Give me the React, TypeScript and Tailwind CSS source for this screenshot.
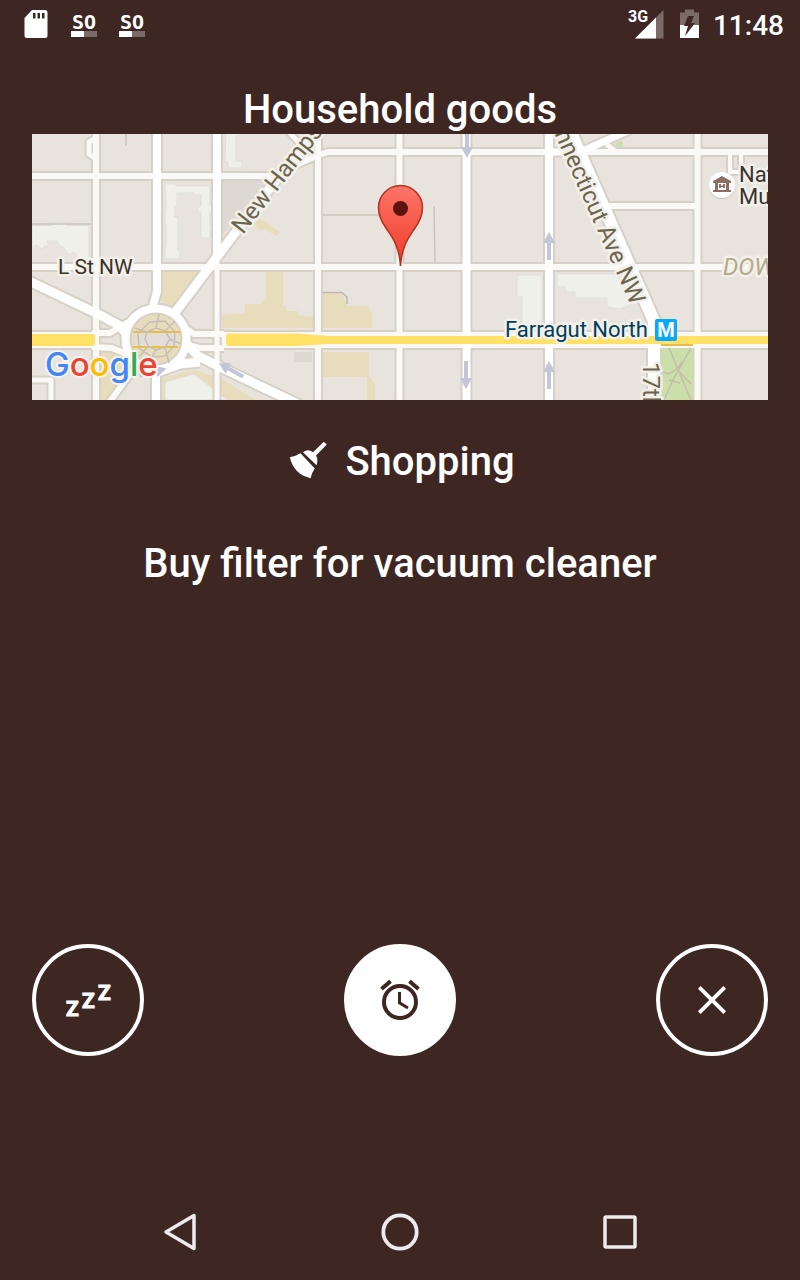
interface Road {
  d: string;
  width: number;
  major?: boolean;
}

const roads: Road[] = [
  { d: "M64 -5V271", width: 6 },
  { d: "M-5 42H240L286 21L296 18H741", width: 6 },
  { d: "M-5 133H741", width: 6 },
  { d: "M286 -5V271", width: 6 },
  { d: "M367.5 -5V271", width: 6 },
  { d: "M665.5 -5V271", width: 6 },
  { d: "M575 72H665", width: 6 },
  { d: "M185 120V271", width: 5 },
  { d: "M-5 206H64M190 206H741", width: 16 },
  { d: "M60 199L78 199L96 188M60 213L80 214L92 219L104 232L76 270", width: 6 },
  { d: "M150 192L162 200H192M152 210L168 214H192", width: 6 },
  { d: "M-5 246H19V271", width: 5 },
  { d: "M255 -4L272 14", width: 5 },
  { d: "M698 18V38H709V18", width: 4 },
  { d: "M572 8L584 18", width: 5 },
  { d: "M125 -5V157L121 172M124 238V271", width: 8, major: true },
  { d: "M185 -5V124", width: 8, major: true },
  { d: "M434.5 -5V271", width: 8, major: true },
  { d: "M517 -5V271", width: 8, major: true },
  { d: "M142 180L200 103L286 -8", width: 9, major: true },
  { d: "M-5 146L70 182L88 192L98 204", width: 9, major: true },
  { d: "M150 205L166 222L188 233L268 271M126 238L148 230L168 228", width: 9, major: true },
  { d: "M516 18H548L598 -4", width: 7, major: true },
  { d: "M537 -6L622 187V271", width: 12, major: true },
  { d: "M94 205a30 30 0 1 0 60 0a30 30 0 1 0 -60 0", width: 9, major: true },
];

const buildings = [
  "M0 91.500H20V88.500H35V91.500H57V129H46V123L42 118L37 121L31 113L27 112L25 107H15L17 110L10 115L5 111L0 114Z",
  "M133 50H144V52H178V71H181V78H178V94H181V96H178V104H169V78H166V72H169V61H162V59H145V73H143V83H146V116H148V125H133V112H134V91H133V75H134Z",
  "M485 141H510V193H490V163H485Z",
  "M525 140H585L601 170L588 175L575 173V164H543V158H533V153H525Z",
  "M194 -2H206V2H204V27H210V34H196V28H193Z",
  "M133 248L162 240L195 266H133Z",
];

const landmarks = [
  "M130 138H172L143 173L129 168Z",
  "M190 181L213 179V170H229L234 163V138H251V172H254V177H266V181L281 183V194H190Z",
  "M291 159H310L315 172H337V178H340V194H291Z",
  "M291 218H337V241L343 251V266H335V243H291Z",
  "M226 83L248 98L245 102L232 95L228 96L221 91Z",
  "M68 216L92 218L103 232L75 266H68Z",
  "M130 244L163 236L190 245L230 270H130Z",
];

function StreetArrow({ x, y, angle }: { x: number; y: number; angle: number }) {
  return (
    <path
      d="M-6 -3L0 -14L6 -3H2V14H-2V-3Z"
      fill="#c3c6d8"
      transform={`translate(${x} ${y}) rotate(${angle})`}
    />
  );
}

function LocationMap() {
  return (
    <svg
      viewBox="0 0 736 266"
      preserveAspectRatio="xMidYMid slice"
      className="block h-[266px] w-full overflow-hidden bg-[#e8e4dd] font-[Roboto,sans-serif]"
      role="img"
      aria-label="Map"
    >
      <defs>
        <linearGradient id="pin" x1="0" y1="0" x2="0" y2="1">
          <stop offset="0" stopColor="#fd7567" />
          <stop offset="1" stopColor="#ee3b2b" />
        </linearGradient>
      </defs>

      <path d="M187 46H238L228 58L191 100Z" fill="#ddd8d1" />
      <rect x="262" y="218" width="18" height="10" fill="#ddd8d1" />
      {landmarks.map((d) => (
        <path key={d} d={d} fill="#e7ddbd" />
      ))}
      {buildings.map((d) => (
        <path key={d} d={d} fill="#f0f0ea" stroke="#dfdfda" strokeWidth="1" />
      ))}
      <path d="M0 90H62M291 81H364M402 72L403 129M94 0V12" stroke="#c9c3b9" strokeWidth="1.500" fill="none" />
      <path d="M291 158.500H310L315 163V170" stroke="#bdb7ac" strokeWidth="1.500" fill="none" />
      <path d="M630 212H661V266H630Z" fill="#cadfaa" />
      <path d="M583 10L590 6L591 12L586 14Z" fill="#cadfaa" />

      <g fill="none" stroke="#d7d0c6" strokeLinejoin="round">
        <path d="M64 4L57 8V20L64 25" strokeWidth="9" />
        {roads.map((road) => (
          <path key={road.d} d={road.d} strokeWidth={road.width + 4} />
        ))}
      </g>
      <g fill="none" strokeLinejoin="round">
        <path d="M64 4L57 8V20L64 25" stroke="#faf9f6" strokeWidth="5" />
        {roads.map((road) => (
          <path key={road.d} d={road.d} stroke={road.major ? "#ffffff" : "#faf9f6"} strokeWidth={road.width} />
        ))}
      </g>
      <path d="M629 214H661V266H631Z" fill="#cadfaa" />
      <path
        d="M637 214L659 266M659 214L641 246L632 266M631 238L637 240L645 235L659 250M637 246L648 249M645 235L650 228"
        stroke="#c5bda9"
        strokeWidth="1.500"
        fill="none"
      />

      <circle cx="124" cy="205" r="25.500" fill="#e7ddbd" stroke="#d7d0c6" strokeWidth="2" />
      <path d="M103 198H146V213H103Z" fill="#e2ddd5" />
      <path d="M101 198H148M101 213H146" stroke="#e9bf3f" strokeWidth="2" />
      <path
        d="M115 198L124 194L133 197L138 205L133 213L124 216L116 212L113 205ZM106 199L118 188L133 187L143 198L142 212L133 222L120 223L107 214ZM124 194L127 180M133 197L143 187M138 205L149 210M133 213L137 229M116 212L108 222M115 198L103 194M124 216L120 223"
        fill="none"
        stroke="#c5bfb5"
        strokeWidth="1.500"
      />

      <g fill="#ffe168">
        <rect x="-5" y="200" width="68" height="12" rx="2" />
        <path d="M196 199.500H266L296 202H520L741 202V210H296L266 212H196Q194 212 194 210V202Q194 199.500 196 199.500Z" />
      </g>
      <path d="M629 211H661" stroke="#e5bb4a" strokeWidth="2" />

      <StreetArrow x={435} y={10} angle={180} />
      <StreetArrow x={517} y={112} angle={0} />
      <StreetArrow x={434} y={241} angle={180} />
      <StreetArrow x={517} y={241} angle={0} />
      <StreetArrow x={199} y={236} angle={-61} />
      <StreetArrow x={121} y={238} angle={75} />

      <g
        className="text-[22px]"
        fill="#6b6550"
        stroke="#f3f0ea"
        strokeWidth="5"
        strokeLinejoin="round"
        paintOrder="stroke"
      >
        <text className="text-[21px]" x="26" y="140" fill="#39322a">
          L St NW
        </text>
        <text className="text-[24px]" transform="translate(211 101) rotate(-52)">
          New Hamps
        </text>
        <text className="text-[24px]" transform="translate(599 172) rotate(66)" textAnchor="end">
          onnecticut Ave NW
        </text>
        <text className="text-[24px]" transform="translate(611 228) rotate(90)">
          17th
        </text>
        <text x="473" y="203" fill="#00405c">
          Farragut North
        </text>
        <text x="707" y="48" fill="#39342f">
          Nat
        </text>
        <text x="707" y="70" fill="#39342f">
          Mu
        </text>
        <text className="text-[24px] italic" x="691" y="141" fill="#b2a98d">
          DOW
        </text>
      </g>

      <rect x="623" y="185" width="22" height="22" rx="2" fill="#08a9fa" />
      <text className="text-[20px] font-bold" x="634" y="203" textAnchor="middle" fill="#ffffff">
        M
      </text>

      <circle cx="690" cy="52" r="13" fill="#cbc5bc" />
      <circle cx="690" cy="51" r="13" fill="#ffffff" />
      <path
        fill="#8d6e63"
        d="M690 42L699 47V49H681V47ZM683 49H686V56H683ZM694 49H697V56H694ZM681 56H699V58H681ZM687 50H689V51.500H691V50H693V54H691V53H689V54H687Z"
      />

      <text
        className="font-[Inter,sans-serif] text-[33px] font-medium"
        x="13"
        y="242"
        stroke="#f5f2ec"
        strokeWidth="4"
        strokeLinejoin="round"
        paintOrder="stroke"
      >
        <tspan fill="#4285f4">G</tspan>
        <tspan fill="#ea4335">o</tspan>
        <tspan fill="#fbbc05">o</tspan>
        <tspan fill="#4285f4">g</tspan>
        <tspan fill="#34a853">l</tspan>
        <tspan fill="#ea4335">e</tspan>
      </text>

      <path
        d="M368.500 132C367 111 360 103 354 94C349 87 346.500 81 346.500 73.500A22 22 0 0 1 390.500 73.500C390.500 81 388 87 383 94C377 103 370 111 368.500 132Z"
        fill="url(#pin)"
        stroke="#b03122"
        strokeWidth="1.500"
      />
      <circle cx="368.500" cy="74.500" r="7.500" fill="#5c130e" />
    </svg>
  );
}

function SdCardIcon() {
  return (
    <svg viewBox="0 0 24 28" className="h-7 w-6" aria-hidden="true">
      <path
        fill="#ffffff"
        fillRule="evenodd"
        d="M8 0H21Q23.500 0 23.500 2.500V25.500Q23.500 28 21 28H3Q.5 28 .5 25.500V8ZM9 3V8.500H11.500V3ZM13.500 3V8.500H16V3ZM18 3V8.500H20.500V3Z"
      />
    </svg>
  );
}

function LevelIcon() {
  return (
    <span className="flex w-[26px] flex-col items-center pt-px">
      <span className="font-['DejaVu_Sans_Mono',monospace] text-[20px] leading-[18px] font-bold">SO</span>
      <span className="flex h-[6px] w-full bg-[#7c6a67]">
        <span className="w-1/2 bg-white" />
      </span>
    </span>
  );
}

function StatusBar() {
  return (
    <header className="flex h-12 items-center justify-between pr-4 pl-3">
      <div className="flex items-center">
        <span className="flex w-12 justify-center">
          <SdCardIcon />
        </span>
        <span className="flex w-12 justify-center">
          <LevelIcon />
        </span>
        <span className="flex w-12 justify-center">
          <LevelIcon />
        </span>
      </div>
      <div className="flex items-center">
        <svg viewBox="0 0 36 30" className="mr-4 h-[30px] w-9" aria-label="3G signal">
          <path d="M7 29.500L35.500 1V29.500Z" fill="#7c6a67" />
          <path d="M7 29.500L28 8.500V29.500Z" fill="#ffffff" />
          <text
            className="text-[16px] font-bold"
            x="0"
            y="13"
            fill="#ffffff"
            stroke="#3e2723"
            strokeWidth="2"
            paintOrder="stroke"
          >
            3G
          </text>
        </svg>
        <svg viewBox="0 0 19 30" className="mr-[14px] h-[30px] w-[19px]" aria-label="Battery charging">
          <path d="M5 0.500H14V3.500H19V16H0V3.500H5Z" fill="#7c6a67" />
          <path d="M0 16H19V29H0Z" fill="#ffffff" />
          <path d="M8 7H14L11 14H15L5 27L8 17H4Z" fill="#3e2723" />
        </svg>
        <span className="pt-1 text-[28px] leading-8 font-medium">11:48</span>
      </div>
    </header>
  );
}

function BroomIcon() {
  return (
    <svg viewBox="1 2 40 40" className="size-10" fill="#ffffff" aria-hidden="true">
      <path d="M1.800 17.200Q8 16 12.500 13.200L26.800 28.500Q23.500 33 22.600 38.200Q6 34.500 1.800 17.200Z" />
      <path d="M15 12.200Q20 8.500 25 12.300L35.800 1.800L38.800 4.600L28 15.500Q30.500 19.500 28.500 25.200Z" />
    </svg>
  );
}

function SnoozeIcon() {
  return (
    <svg viewBox="0 0 48 48" className="size-12" aria-hidden="true">
      <g className="text-[21px] font-bold" fill="#ffffff" stroke="#ffffff" strokeWidth="1">
        <text x="2" y="40">Z</text>
        <text x="18" y="32">Z</text>
        <text x="34" y="24">Z</text>
      </g>
    </svg>
  );
}

function AlarmIcon() {
  return (
    <svg viewBox="0 0 48 48" className="size-12" fill="none" stroke="#3e2723" strokeWidth="4" aria-hidden="true">
      <circle cx="24" cy="26" r="16" />
      <path d="M5.500 13L14.500 5.200M33.500 5.200L42.500 13" />
      <path d="M23.500 16V26.800L32 32" strokeWidth="3" />
    </svg>
  );
}

function CloseIcon() {
  return (
    <svg viewBox="0 0 48 48" className="size-12" stroke="#ffffff" strokeWidth="3.800" aria-hidden="true">
      <path d="M11.300 11.300L36.700 36.700M36.700 11.300L11.300 36.700" />
    </svg>
  );
}

const roundButton = "flex size-28 items-center justify-center rounded-full border-4 border-white";

export default function App() {
  return (
    <div className="flex min-h-screen flex-col bg-[#3e2723] font-[Roboto,sans-serif] text-white">
      <StatusBar />

      <main className="flex flex-1 flex-col px-8 pt-[38px] pb-32">
        <h1 className="text-center text-[40px] leading-[48px] font-medium">Household goods</h1>
        <LocationMap />
        <div className="mt-9 flex items-center justify-center gap-4 pl-1">
          <BroomIcon />
          <h2 className="text-[40px] leading-[52px] font-medium">Shopping</h2>
        </div>
        <p className="mt-[52px] text-center text-[40px] leading-[48px] font-medium">Buy filter for vacuum cleaner</p>

        <div className="mt-auto flex justify-between">
          <button type="button" aria-label="Snooze" className={roundButton}>
            <SnoozeIcon />
          </button>
          <button type="button" aria-label="Alarm" className={`${roundButton} bg-white`}>
            <AlarmIcon />
          </button>
          <button type="button" aria-label="Dismiss" className={roundButton}>
            <CloseIcon />
          </button>
        </div>
      </main>

      <nav className="grid h-24 grid-cols-3 px-[70px]">
        <button type="button" aria-label="Back" className="flex items-center justify-center">
          <svg viewBox="0 0 40 40" className="size-10" fill="none" stroke="#eeeceb" strokeWidth="3.500" strokeLinejoin="round">
            <path d="M6 20L34 3.500V36.500Z" />
          </svg>
        </button>
        <button type="button" aria-label="Home" className="flex items-center justify-center">
          <svg viewBox="0 0 40 40" className="size-10" fill="none" stroke="#eeeceb" strokeWidth="3.800">
            <circle cx="20" cy="20" r="16.700" />
          </svg>
        </button>
        <button type="button" aria-label="Recent apps" className="flex items-center justify-center">
          <svg viewBox="0 0 40 40" className="size-10" fill="none" stroke="#eeeceb" strokeWidth="3.500">
            <rect x="5" y="5" width="30" height="30" rx="1" />
          </svg>
        </button>
      </nav>
    </div>
  );
}
